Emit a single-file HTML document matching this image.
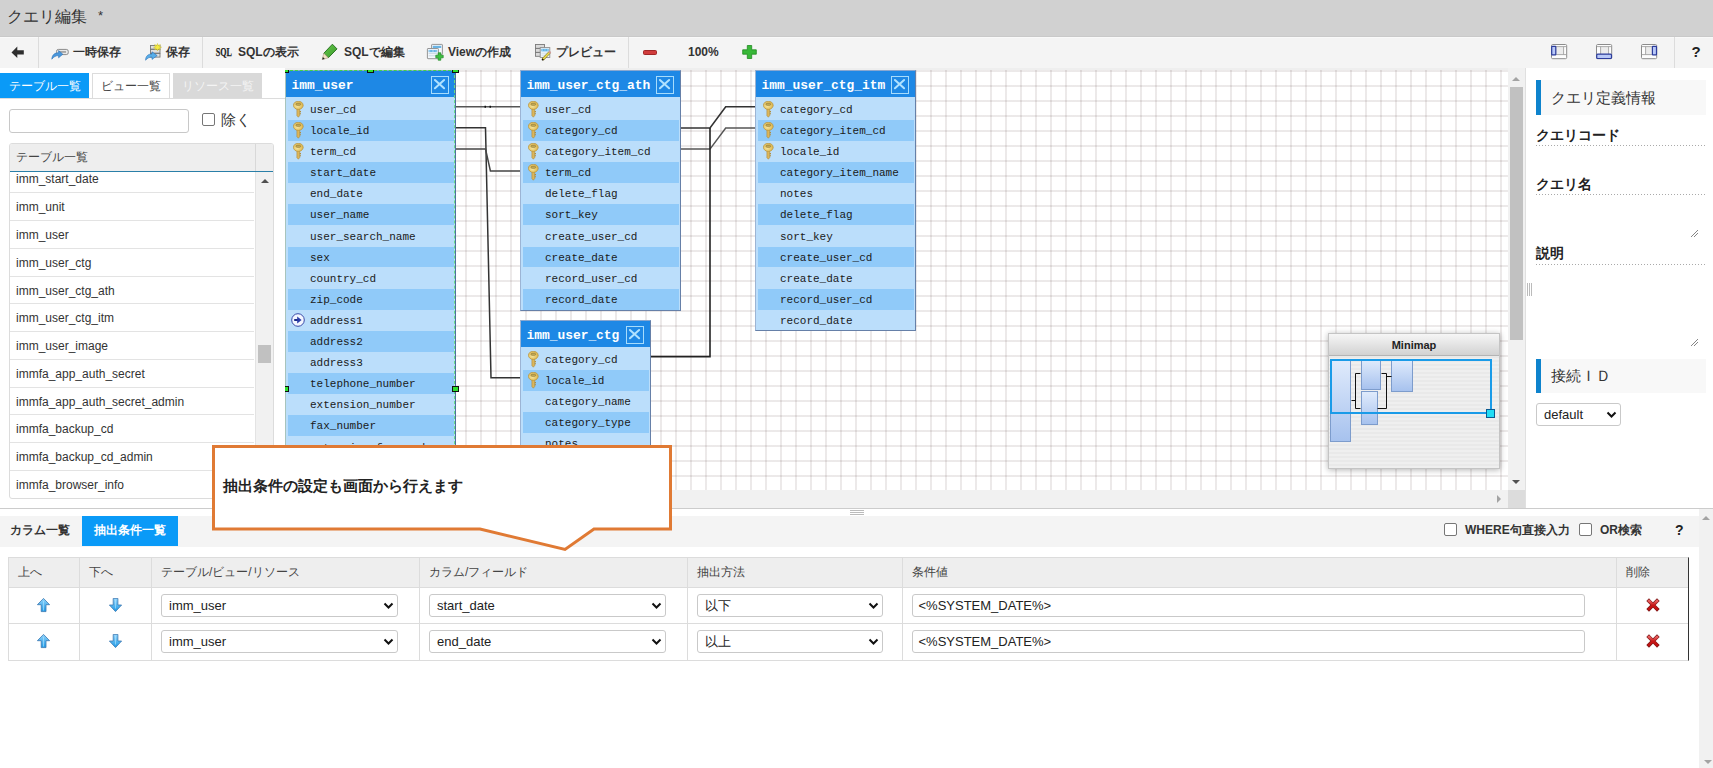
<!DOCTYPE html>
<html lang="ja"><head><meta charset="utf-8"><title>クエリ編集</title>
<style>
*{box-sizing:border-box;margin:0;padding:0}
html,body{width:1713px;height:768px;overflow:hidden;background:#fff}
body{position:relative;font-family:"Liberation Sans",sans-serif;color:#333}
.ab{position:absolute}
.tx{position:absolute;white-space:nowrap}
.tb{position:absolute;top:36px;height:32px;line-height:32px;font-size:12px;font-weight:bold;color:#333;white-space:nowrap}
.sep{position:absolute;top:37px;width:1px;height:31px;background:#dcdcdc}
.ert{position:absolute;background:#bbdefb;border:1px solid #7090c0;overflow:hidden}
.erh{position:absolute;left:0;top:0;right:0;height:25.8px;background:#1e88e5;color:#fff;font:bold 12.9px "Liberation Mono",monospace;line-height:30px;padding-left:5.5px;white-space:nowrap}
.erx{position:absolute;top:5px;width:18px;height:18px;border:1.7px solid #a6dcfc}
.err{position:absolute;left:1.5px;right:1px;height:20.9px;font:11px "Liberation Mono",monospace;color:#1a1a1a;line-height:23px;padding-left:22.5px;white-space:nowrap}
.err.alt{background:#90caf9}
.key{position:absolute;left:5.2px;top:2.1px}
.lr{position:absolute;left:0;width:244px;height:27.775px;border-bottom:1px solid #e3e3e3;font-size:12px;line-height:26px;padding-top:1px;padding-left:6px;color:#333;white-space:nowrap}
.sel{position:absolute;height:23px;border:1px solid #c9c9c9;border-radius:3px;background:#fff;font-size:13px;line-height:22px;padding-left:7px;color:#222;white-space:nowrap}
.chev{position:absolute;right:3.5px;top:6.5px}
</style></head><body>

<div class="ab" style="left:0;top:0;width:1713px;height:37px;background:#d1d1d1;border-bottom:1px solid #c9c9c9"></div>
<div class="tx" style="left:7px;top:0;height:36px;line-height:34px;font-size:16px;color:#333">クエリ編集</div>
<div class="tx" style="left:98px;top:8px;font-size:13px;line-height:16px;color:#333">*</div>
<div class="ab" style="left:0;top:37px;width:1713px;height:31px;background:#f4f4f4;border-top:1px solid #f9f9f9"></div>
<svg class="ab" style="left:11px;top:45.5px" width="14" height="13" viewBox="0 0 14 13"><path d="M0.5 6.4 L6.3 0.6 L6.3 4.3 L12.8 4.3 L12.8 8.4 L6.3 8.4 L6.3 12.1 Z" fill="#2e2e2e"/></svg>
<div class="sep" style="left:38px"></div>
<div class="sep" style="left:202px"></div>
<div class="sep" style="left:628px"></div>
<div class="sep" style="left:1674px"></div>
<svg class="ab" style="left:51px;top:46px" width="18" height="14" viewBox="0 0 18 14">
<rect x="5.5" y="3.4" width="11.8" height="5.2" rx="2" fill="#e8e8e8" stroke="#8a8a8a"/>
<rect x="8" y="5.3" width="7" height="1.3" fill="#8a8a8a"/>
<path d="M0.8 13.2 C1.2 8.5 3.8 6.8 7.6 6.8 L7.6 4.6 L11.8 8.2 L7.6 11.8 L7.6 9.6 C4.8 9.6 2.8 10.8 0.8 13.2 Z" fill="#4a98dc" stroke="#2a6fb5" stroke-width="0.6"/>
</svg>
<div class="tb" style="left:73px;">一時保存</div>
<svg class="ab" style="left:145px;top:43px" width="17" height="18" viewBox="0 0 17 18">
<rect x="5.5" y="2.5" width="9.5" height="3.6" fill="#e0e0e0" stroke="#777" stroke-width="0.9"/>
<rect x="5.5" y="6.5" width="9.5" height="3.6" fill="#e0e0e0" stroke="#777" stroke-width="0.9"/>
<rect x="5.5" y="10.5" width="9.5" height="3.6" fill="#e0e0e0" stroke="#777" stroke-width="0.9"/>
<path d="M12.5 0.4 L13.2 2.4 L15.4 1.5 L14.5 3.5 L16.6 4.2 L14.5 4.9 L15.4 6.9 L13.2 6 L12.5 8 L11.8 6 L9.6 6.9 L10.5 4.9 L8.4 4.2 L10.5 3.5 L9.6 1.5 L11.8 2.4 Z" fill="#f4ea40" stroke="#c8b820" stroke-width="0.4"/>
<path d="M0.6 17.2 C0.6 13 3.2 11 7 11 L7 8.8 L12.2 12.6 L7 16.4 L7 14 C4.4 14 2.4 15.2 0.6 17.2 Z" fill="#58aee8" stroke="#2a70b8" stroke-width="0.6"/>
</svg>
<div class="tb" style="left:166px;">保存</div>
<svg class="ab" style="left:215px;top:45px" width="19" height="14" viewBox="0 0 19 14"><text x="0.8" y="11" font-family="Liberation Serif" font-size="12.2" font-weight="bold" fill="#1e1e1e" stroke="#1e1e1e" stroke-width="0.25" textLength="16.2" lengthAdjust="spacingAndGlyphs">SQL</text></svg>
<div class="tb" style="left:238px;">SQLの表示</div>
<svg class="ab" style="left:321px;top:43px" width="17" height="18" viewBox="0 0 17 18">
<defs><linearGradient id="pg" x1="0" y1="0" x2="1" y2="1"><stop offset="0" stop-color="#66c84a"/><stop offset="1" stop-color="#3a9a2a"/></linearGradient></defs>
<path d="M11.4 1.2 L16 5.9 L7.3 14.8 L2.8 10.3 Z" fill="url(#pg)" stroke="#1f6a18" stroke-width="0.9" stroke-linejoin="round"/>
<path d="M2.8 10.3 L7.3 14.8 L1.2 16.6 Z" fill="#f2e2c4" stroke="#9a8a70" stroke-width="0.5"/>
<path d="M1.2 16.6 L1.9 14 L3.8 15.9 Z" fill="#222"/>
</svg>
<div class="tb" style="left:344px;">SQLで編集</div>
<svg class="ab" style="left:426px;top:43px" width="18" height="18" viewBox="0 0 18 18">
<rect x="5.6" y="1.4" width="10.8" height="10" rx="0.6" fill="#f4f8fc" stroke="#8a8a8a" stroke-width="0.9"/>
<rect x="6.8" y="2.8" width="8.4" height="2.2" fill="#6ab4e4"/>
<rect x="1.4" y="5.5" width="11" height="10.2" rx="0.6" fill="#f4f8fc" stroke="#8a8a8a" stroke-width="0.9"/>
<rect x="2.6" y="6.9" width="8.6" height="2.3" fill="#6ab4e4"/>
<path d="M3.2 8 H4.2 M6.3 8 H7.7 M9.6 8 H10.6" stroke="#dff2ff" stroke-width="0.9"/>
<path d="M2.6 10.6 H11.2 M2.6 12.8 H11.2" stroke="#c4d4e0" stroke-width="0.9"/>
<path d="M12.2 9.8 H14.8 V12.2 H17.2 V14.8 H14.8 V17.2 H12.2 V14.8 H9.8 V12.2 H12.2 Z" fill="#3cc040" stroke="#1f8a24" stroke-width="0.7" stroke-linejoin="round"/>
</svg>
<div class="tb" style="left:448px;">Viewの作成</div>
<svg class="ab" style="left:534px;top:43px" width="18" height="18" viewBox="0 0 18 18">
<rect x="1.5" y="1.5" width="9" height="3.8" fill="#dadada" stroke="#7a7a7a" stroke-width="0.9"/>
<rect x="1.5" y="5.5" width="9" height="3.8" fill="#dadada" stroke="#7a7a7a" stroke-width="0.9"/>
<rect x="1.5" y="9.5" width="9" height="3.8" fill="#dadada" stroke="#7a7a7a" stroke-width="0.9"/>
<rect x="6.2" y="4.6" width="9.6" height="9.8" fill="#f2f8fc" stroke="#8a8a8a" stroke-width="0.9"/>
<rect x="7.3" y="5.8" width="7.4" height="2.6" fill="#62b4e6"/>
<path d="M8.2 7 H9 M10.6 7 H11.4 M13 7 H13.8" stroke="#dff2ff" stroke-width="0.9"/>
<path d="M7.3 10.2 H14.7 M7.3 12.2 H14.7" stroke="#c8d6e0" stroke-width="0.8"/>
<path d="M9.2 16 L15.4 9.6" stroke="#7a6a20" stroke-width="2.6" stroke-linecap="round"/>
<path d="M9.2 16 L15.4 9.6" stroke="#eadc50" stroke-width="1.7"/>
<path d="M15.2 9.8 L16.4 8.6" stroke="#d89aa0" stroke-width="2.2"/>
<circle cx="8.6" cy="16.6" r="0.9" fill="#111"/>
</svg>
<div class="tb" style="left:556px;">プレビュー</div>
<div class="ab" style="left:643px;top:49.5px;width:14px;height:5px;background:#d03c3c;border:1px solid #a02626;border-radius:1.5px"></div>
<div class="tb" style="left:688px;">100%</div>
<svg class="ab" style="left:742px;top:45px" width="15" height="14" viewBox="0 0 15 14"><path d="M5.3 0.5 H9.7 V4.8 H14.3 V9.2 H9.7 V13.5 H5.3 V9.2 H0.7 V4.8 H5.3 Z" fill="#38b838" stroke="#1f8a1f" stroke-width="0.8"/></svg>
<svg class="ab" style="left:1551px;top:44px" width="17" height="16" viewBox="0 0 17 16"><rect x="0.5" y="0.5" width="15.2" height="14.2" rx="1.2" fill="#fdfdfd" stroke="#8c8c8c" stroke-width="1"/><rect x="5" y="3" width="7.2" height="7.2" fill="#ececec"/><path d="M0.8 2.6 H15.4 M0.8 10.6 H15.4 M4.6 2.6 V10.6 M12.6 2.6 V10.6" stroke="#a0a0a0" stroke-width="0.9"/><rect x="0.7" y="2.3" width="4.1" height="8.6" rx="0.6" fill="#b8c8f8" stroke="#2c3c9c" stroke-width="1.2"/></svg>
<svg class="ab" style="left:1596px;top:44px" width="17" height="16" viewBox="0 0 17 16"><rect x="0.5" y="0.5" width="15.2" height="14.2" rx="1.2" fill="#fdfdfd" stroke="#8c8c8c" stroke-width="1"/><rect x="5" y="3" width="7.2" height="7.2" fill="#ececec"/><path d="M0.8 2.6 H15.4 M0.8 10.6 H15.4 M4.6 2.6 V10.6 M12.6 2.6 V10.6" stroke="#a0a0a0" stroke-width="0.9"/><rect x="0.7" y="10.2" width="14.8" height="4.3" rx="1" fill="#b8c8f8" stroke="#2c3c9c" stroke-width="1.2"/></svg>
<svg class="ab" style="left:1641px;top:44px" width="17" height="16" viewBox="0 0 17 16"><rect x="0.5" y="0.5" width="15.2" height="14.2" rx="1.2" fill="#fdfdfd" stroke="#8c8c8c" stroke-width="1"/><rect x="5" y="3" width="7.2" height="7.2" fill="#ececec"/><path d="M0.8 2.6 H15.4 M0.8 10.6 H15.4 M4.6 2.6 V10.6 M12.6 2.6 V10.6" stroke="#a0a0a0" stroke-width="0.9"/><rect x="11.4" y="2.3" width="4.1" height="8.6" rx="0.6" fill="#b8c8f8" stroke="#2c3c9c" stroke-width="1.2"/></svg>
<div class="tx" style="left:1691.5px;top:36px;height:32px;line-height:32px;font-size:15px;font-weight:bold;color:#222">?</div>
<div class="tx" style="left:0;top:73px;width:89px;height:25px;background:#0a9af7;color:#fff;font-size:11.5px;line-height:26px;text-align:center">テーブル一覧</div>
<div class="tx" style="left:92px;top:73px;width:78px;height:26px;background:#fff;border:1px solid #dcdcdc;border-bottom:none;color:#444;font-size:11.5px;line-height:25px;text-align:center">ビュー一覧</div>
<div class="tx" style="left:173px;top:73px;width:89px;height:25px;background:#d9d9d9;color:#f4f4f4;font-size:11.5px;line-height:26px;text-align:center">リソース一覧</div>
<div class="ab" style="left:0;top:98px;width:285px;height:1px;background:#dcdcdc"></div>
<div class="ab" style="left:9px;top:109px;width:180px;height:24px;border:1px solid #c8c8c8;border-radius:3px;background:#fff"></div>
<div class="ab" style="left:202px;top:113px;width:13px;height:13px;border:1px solid #767676;border-radius:2px;background:#fff"></div>
<div class="tx" style="left:220.5px;top:109px;height:22px;line-height:21px;font-size:15px;color:#333">除く</div>
<div class="ab" style="left:9px;top:143px;width:265px;height:356px;border:1px solid #dcdcdc;border-radius:3px;overflow:hidden;background:#fff">
<div class="ab" style="left:0;top:0;width:263px;height:28px;background:#eeeeee;border-bottom:1px solid #2a7fa8"></div>
<div class="ab" style="left:245px;top:0;width:1px;height:27px;background:#d8d8d8"></div>
<div class="tx" style="left:6px;top:0;height:27px;line-height:26px;font-size:12px;color:#444">テーブル一覧</div>
<div class="ab" style="left:0;top:28px;width:245px;height:326px;overflow:hidden">
<div class="lr" style="top:-6.58px">imm_start_date</div>
<div class="lr" style="top:21.20px">imm_unit</div>
<div class="lr" style="top:48.97px">imm_user</div>
<div class="lr" style="top:76.75px">imm_user_ctg</div>
<div class="lr" style="top:104.52px">imm_user_ctg_ath</div>
<div class="lr" style="top:132.30px">imm_user_ctg_itm</div>
<div class="lr" style="top:160.07px">imm_user_image</div>
<div class="lr" style="top:187.85px">immfa_app_auth_secret</div>
<div class="lr" style="top:215.62px">immfa_app_auth_secret_admin</div>
<div class="lr" style="top:243.40px">immfa_backup_cd</div>
<div class="lr" style="top:271.18px">immfa_backup_cd_admin</div>
<div class="lr" style="top:298.95px">immfa_browser_info</div>
<div class="lr" style="top:326.72px">immfa_browser_xx</div>
</div>
<div class="ab" style="left:245px;top:28px;width:1px;height:326px;background:#e3e3e3"></div>
<div class="ab" style="left:246px;top:28px;width:17px;height:326px;background:#f1f1f1"></div>
<svg class="ab" style="left:250px;top:34px" width="10" height="6"><path d="M1 5 L5 1 L9 5 Z" fill="#505050"/></svg>
<div class="ab" style="left:248px;top:201px;width:13px;height:18px;background:#c1c1c1"></div>
</div>
<div class="ab" style="left:285px;top:68px;width:1240px;height:441px;overflow:hidden;background:#fff">
<div class="ab" style="left:0;top:0;width:1223px;height:422px;overflow:hidden">
<div class="ab" style="left:0;top:0;width:1223px;height:422px;background-color:#fff;background-image:linear-gradient(to right,rgba(55,25,25,0.095) 2px,transparent 2px),linear-gradient(to bottom,rgba(55,25,25,0.095) 2px,transparent 2px);background-size:15px 15px;background-position:0 2px"></div>
<div class="ert" style="left:0px;top:2px;width:171px;height:640px;border-color:#50709a;border-left-color:#9cb4d4;border-top-color:#8aa8d0">
<div class="erh">imm_user</div>
<svg class="erx" style="left:144.5px" width="18" height="18" viewBox="0 0 18 18"><path d="M3.3 3.4 L13.6 12.6 M13.6 3.4 L3.3 12.6" stroke="#b0e2ff" stroke-width="2.3" stroke-linecap="round"/></svg>
<div class="err" style="top:27.90px"><svg class="key" width="11" height="17" viewBox="0 0 11 17"><defs><radialGradient id="kg" cx="0.4" cy="0.6" r="0.7"><stop offset="0" stop-color="#f6e49a"/><stop offset="1" stop-color="#d8ae40"/></radialGradient></defs><path d="M3.9 7.6 H6.7 V14.6 L5.3 16.2 L3.9 14.6 Z" fill="#dcb65a" stroke="#a88434" stroke-width="0.55"/><path d="M6.7 10.6 H8 M6.7 12.8 H8" stroke="#b08c3c" stroke-width="1.1"/><ellipse cx="5.3" cy="4.3" rx="4.9" ry="4.1" fill="url(#kg)" stroke="#b48c38" stroke-width="0.65"/><rect x="3" y="2.3" width="4.6" height="2" rx="1" fill="#c8b058" stroke="#8a7030" stroke-width="0.6"/></svg>user_cd</div>
<div class="err alt" style="top:49.00px"><svg class="key" width="11" height="17" viewBox="0 0 11 17"><defs><radialGradient id="kg" cx="0.4" cy="0.6" r="0.7"><stop offset="0" stop-color="#f6e49a"/><stop offset="1" stop-color="#d8ae40"/></radialGradient></defs><path d="M3.9 7.6 H6.7 V14.6 L5.3 16.2 L3.9 14.6 Z" fill="#dcb65a" stroke="#a88434" stroke-width="0.55"/><path d="M6.7 10.6 H8 M6.7 12.8 H8" stroke="#b08c3c" stroke-width="1.1"/><ellipse cx="5.3" cy="4.3" rx="4.9" ry="4.1" fill="url(#kg)" stroke="#b48c38" stroke-width="0.65"/><rect x="3" y="2.3" width="4.6" height="2" rx="1" fill="#c8b058" stroke="#8a7030" stroke-width="0.6"/></svg>locale_id</div>
<div class="err" style="top:70.10px"><svg class="key" width="11" height="17" viewBox="0 0 11 17"><defs><radialGradient id="kg" cx="0.4" cy="0.6" r="0.7"><stop offset="0" stop-color="#f6e49a"/><stop offset="1" stop-color="#d8ae40"/></radialGradient></defs><path d="M3.9 7.6 H6.7 V14.6 L5.3 16.2 L3.9 14.6 Z" fill="#dcb65a" stroke="#a88434" stroke-width="0.55"/><path d="M6.7 10.6 H8 M6.7 12.8 H8" stroke="#b08c3c" stroke-width="1.1"/><ellipse cx="5.3" cy="4.3" rx="4.9" ry="4.1" fill="url(#kg)" stroke="#b48c38" stroke-width="0.65"/><rect x="3" y="2.3" width="4.6" height="2" rx="1" fill="#c8b058" stroke="#8a7030" stroke-width="0.6"/></svg>term_cd</div>
<div class="err alt" style="top:91.20px">start_date</div>
<div class="err" style="top:112.30px">end_date</div>
<div class="err alt" style="top:133.40px">user_name</div>
<div class="err" style="top:154.50px">user_search_name</div>
<div class="err alt" style="top:175.60px">sex</div>
<div class="err" style="top:196.70px">country_cd</div>
<div class="err alt" style="top:217.80px">zip_code</div>
<div class="err" style="top:238.90px"><svg class="key" style="left:3.5px;top:2.8px" width="15" height="15" viewBox="0 0 15 15"><circle cx="7" cy="7" r="6.3" fill="#f4f6ff" stroke="#3a4aa8" stroke-width="1"/><path d="M3.2 7 H8.5" stroke="#1a2a88" stroke-width="2"/><path d="M6.2 3.6 L10.6 7 L6.2 10.4 Z" fill="#2a3aa8"/></svg>address1</div>
<div class="err alt" style="top:260.00px">address2</div>
<div class="err" style="top:281.10px">address3</div>
<div class="err alt" style="top:302.20px">telephone_number</div>
<div class="err" style="top:323.30px">extension_number</div>
<div class="err alt" style="top:344.40px">fax_number</div>
<div class="err" style="top:365.50px">extension_fax_number</div>
<div class="err alt" style="top:386.60px">mail_address</div>
<div class="err" style="top:407.70px">delete_flag</div>
<div class="err alt" style="top:428.80px">sort_key</div>
</div>
<div class="ab" style="left:0;top:2px;width:1px;height:640px;background:#a8c4bc"></div>
<div class="ert" style="left:235px;top:2px;width:161px;height:240.5px;border-color:#6680a8;border-left-color:#9cb4d4;border-top-color:#8aa8d0">
<div class="erh">imm_user_ctg_ath</div>
<svg class="erx" style="left:134.5px" width="18" height="18" viewBox="0 0 18 18"><path d="M3.3 3.4 L13.6 12.6 M13.6 3.4 L3.3 12.6" stroke="#b0e2ff" stroke-width="2.3" stroke-linecap="round"/></svg>
<div class="err" style="top:27.90px"><svg class="key" width="11" height="17" viewBox="0 0 11 17"><defs><radialGradient id="kg" cx="0.4" cy="0.6" r="0.7"><stop offset="0" stop-color="#f6e49a"/><stop offset="1" stop-color="#d8ae40"/></radialGradient></defs><path d="M3.9 7.6 H6.7 V14.6 L5.3 16.2 L3.9 14.6 Z" fill="#dcb65a" stroke="#a88434" stroke-width="0.55"/><path d="M6.7 10.6 H8 M6.7 12.8 H8" stroke="#b08c3c" stroke-width="1.1"/><ellipse cx="5.3" cy="4.3" rx="4.9" ry="4.1" fill="url(#kg)" stroke="#b48c38" stroke-width="0.65"/><rect x="3" y="2.3" width="4.6" height="2" rx="1" fill="#c8b058" stroke="#8a7030" stroke-width="0.6"/></svg>user_cd</div>
<div class="err alt" style="top:49.00px"><svg class="key" width="11" height="17" viewBox="0 0 11 17"><defs><radialGradient id="kg" cx="0.4" cy="0.6" r="0.7"><stop offset="0" stop-color="#f6e49a"/><stop offset="1" stop-color="#d8ae40"/></radialGradient></defs><path d="M3.9 7.6 H6.7 V14.6 L5.3 16.2 L3.9 14.6 Z" fill="#dcb65a" stroke="#a88434" stroke-width="0.55"/><path d="M6.7 10.6 H8 M6.7 12.8 H8" stroke="#b08c3c" stroke-width="1.1"/><ellipse cx="5.3" cy="4.3" rx="4.9" ry="4.1" fill="url(#kg)" stroke="#b48c38" stroke-width="0.65"/><rect x="3" y="2.3" width="4.6" height="2" rx="1" fill="#c8b058" stroke="#8a7030" stroke-width="0.6"/></svg>category_cd</div>
<div class="err" style="top:70.10px"><svg class="key" width="11" height="17" viewBox="0 0 11 17"><defs><radialGradient id="kg" cx="0.4" cy="0.6" r="0.7"><stop offset="0" stop-color="#f6e49a"/><stop offset="1" stop-color="#d8ae40"/></radialGradient></defs><path d="M3.9 7.6 H6.7 V14.6 L5.3 16.2 L3.9 14.6 Z" fill="#dcb65a" stroke="#a88434" stroke-width="0.55"/><path d="M6.7 10.6 H8 M6.7 12.8 H8" stroke="#b08c3c" stroke-width="1.1"/><ellipse cx="5.3" cy="4.3" rx="4.9" ry="4.1" fill="url(#kg)" stroke="#b48c38" stroke-width="0.65"/><rect x="3" y="2.3" width="4.6" height="2" rx="1" fill="#c8b058" stroke="#8a7030" stroke-width="0.6"/></svg>category_item_cd</div>
<div class="err alt" style="top:91.20px"><svg class="key" width="11" height="17" viewBox="0 0 11 17"><defs><radialGradient id="kg" cx="0.4" cy="0.6" r="0.7"><stop offset="0" stop-color="#f6e49a"/><stop offset="1" stop-color="#d8ae40"/></radialGradient></defs><path d="M3.9 7.6 H6.7 V14.6 L5.3 16.2 L3.9 14.6 Z" fill="#dcb65a" stroke="#a88434" stroke-width="0.55"/><path d="M6.7 10.6 H8 M6.7 12.8 H8" stroke="#b08c3c" stroke-width="1.1"/><ellipse cx="5.3" cy="4.3" rx="4.9" ry="4.1" fill="url(#kg)" stroke="#b48c38" stroke-width="0.65"/><rect x="3" y="2.3" width="4.6" height="2" rx="1" fill="#c8b058" stroke="#8a7030" stroke-width="0.6"/></svg>term_cd</div>
<div class="err" style="top:112.30px">delete_flag</div>
<div class="err alt" style="top:133.40px">sort_key</div>
<div class="err" style="top:154.50px">create_user_cd</div>
<div class="err alt" style="top:175.60px">create_date</div>
<div class="err" style="top:196.70px">record_user_cd</div>
<div class="err alt" style="top:217.80px">record_date</div>
</div>
<div class="ert" style="left:470px;top:2px;width:161px;height:260.5px;border-color:#6680a8;border-left-color:#9cb4d4;border-top-color:#8aa8d0">
<div class="erh">imm_user_ctg_itm</div>
<svg class="erx" style="left:134.5px" width="18" height="18" viewBox="0 0 18 18"><path d="M3.3 3.4 L13.6 12.6 M13.6 3.4 L3.3 12.6" stroke="#b0e2ff" stroke-width="2.3" stroke-linecap="round"/></svg>
<div class="err" style="top:27.90px"><svg class="key" width="11" height="17" viewBox="0 0 11 17"><defs><radialGradient id="kg" cx="0.4" cy="0.6" r="0.7"><stop offset="0" stop-color="#f6e49a"/><stop offset="1" stop-color="#d8ae40"/></radialGradient></defs><path d="M3.9 7.6 H6.7 V14.6 L5.3 16.2 L3.9 14.6 Z" fill="#dcb65a" stroke="#a88434" stroke-width="0.55"/><path d="M6.7 10.6 H8 M6.7 12.8 H8" stroke="#b08c3c" stroke-width="1.1"/><ellipse cx="5.3" cy="4.3" rx="4.9" ry="4.1" fill="url(#kg)" stroke="#b48c38" stroke-width="0.65"/><rect x="3" y="2.3" width="4.6" height="2" rx="1" fill="#c8b058" stroke="#8a7030" stroke-width="0.6"/></svg>category_cd</div>
<div class="err alt" style="top:49.00px"><svg class="key" width="11" height="17" viewBox="0 0 11 17"><defs><radialGradient id="kg" cx="0.4" cy="0.6" r="0.7"><stop offset="0" stop-color="#f6e49a"/><stop offset="1" stop-color="#d8ae40"/></radialGradient></defs><path d="M3.9 7.6 H6.7 V14.6 L5.3 16.2 L3.9 14.6 Z" fill="#dcb65a" stroke="#a88434" stroke-width="0.55"/><path d="M6.7 10.6 H8 M6.7 12.8 H8" stroke="#b08c3c" stroke-width="1.1"/><ellipse cx="5.3" cy="4.3" rx="4.9" ry="4.1" fill="url(#kg)" stroke="#b48c38" stroke-width="0.65"/><rect x="3" y="2.3" width="4.6" height="2" rx="1" fill="#c8b058" stroke="#8a7030" stroke-width="0.6"/></svg>category_item_cd</div>
<div class="err" style="top:70.10px"><svg class="key" width="11" height="17" viewBox="0 0 11 17"><defs><radialGradient id="kg" cx="0.4" cy="0.6" r="0.7"><stop offset="0" stop-color="#f6e49a"/><stop offset="1" stop-color="#d8ae40"/></radialGradient></defs><path d="M3.9 7.6 H6.7 V14.6 L5.3 16.2 L3.9 14.6 Z" fill="#dcb65a" stroke="#a88434" stroke-width="0.55"/><path d="M6.7 10.6 H8 M6.7 12.8 H8" stroke="#b08c3c" stroke-width="1.1"/><ellipse cx="5.3" cy="4.3" rx="4.9" ry="4.1" fill="url(#kg)" stroke="#b48c38" stroke-width="0.65"/><rect x="3" y="2.3" width="4.6" height="2" rx="1" fill="#c8b058" stroke="#8a7030" stroke-width="0.6"/></svg>locale_id</div>
<div class="err alt" style="top:91.20px">category_item_name</div>
<div class="err" style="top:112.30px">notes</div>
<div class="err alt" style="top:133.40px">delete_flag</div>
<div class="err" style="top:154.50px">sort_key</div>
<div class="err alt" style="top:175.60px">create_user_cd</div>
<div class="err" style="top:196.70px">create_date</div>
<div class="err alt" style="top:217.80px">record_user_cd</div>
<div class="err" style="top:238.90px">record_date</div>
</div>
<div class="ert" style="left:235px;top:252px;width:131px;height:240px;border-color:#6680a8;border-left-color:#9cb4d4;border-top-color:#8aa8d0">
<div class="erh">imm_user_ctg</div>
<svg class="erx" style="left:104.5px" width="18" height="18" viewBox="0 0 18 18"><path d="M3.3 3.4 L13.6 12.6 M13.6 3.4 L3.3 12.6" stroke="#b0e2ff" stroke-width="2.3" stroke-linecap="round"/></svg>
<div class="err" style="top:27.90px"><svg class="key" width="11" height="17" viewBox="0 0 11 17"><defs><radialGradient id="kg" cx="0.4" cy="0.6" r="0.7"><stop offset="0" stop-color="#f6e49a"/><stop offset="1" stop-color="#d8ae40"/></radialGradient></defs><path d="M3.9 7.6 H6.7 V14.6 L5.3 16.2 L3.9 14.6 Z" fill="#dcb65a" stroke="#a88434" stroke-width="0.55"/><path d="M6.7 10.6 H8 M6.7 12.8 H8" stroke="#b08c3c" stroke-width="1.1"/><ellipse cx="5.3" cy="4.3" rx="4.9" ry="4.1" fill="url(#kg)" stroke="#b48c38" stroke-width="0.65"/><rect x="3" y="2.3" width="4.6" height="2" rx="1" fill="#c8b058" stroke="#8a7030" stroke-width="0.6"/></svg>category_cd</div>
<div class="err alt" style="top:49.00px"><svg class="key" width="11" height="17" viewBox="0 0 11 17"><defs><radialGradient id="kg" cx="0.4" cy="0.6" r="0.7"><stop offset="0" stop-color="#f6e49a"/><stop offset="1" stop-color="#d8ae40"/></radialGradient></defs><path d="M3.9 7.6 H6.7 V14.6 L5.3 16.2 L3.9 14.6 Z" fill="#dcb65a" stroke="#a88434" stroke-width="0.55"/><path d="M6.7 10.6 H8 M6.7 12.8 H8" stroke="#b08c3c" stroke-width="1.1"/><ellipse cx="5.3" cy="4.3" rx="4.9" ry="4.1" fill="url(#kg)" stroke="#b48c38" stroke-width="0.65"/><rect x="3" y="2.3" width="4.6" height="2" rx="1" fill="#c8b058" stroke="#8a7030" stroke-width="0.6"/></svg>locale_id</div>
<div class="err" style="top:70.10px">category_name</div>
<div class="err alt" style="top:91.20px">category_type</div>
<div class="err" style="top:112.30px">notes</div>
<div class="err alt" style="top:133.40px">delete_flag</div>
<div class="err" style="top:154.50px">sort_key</div>
</div>
<div class="ab" style="left:0;top:2px;width:171px;height:1px;border-top:1px dashed #44d444"></div>
<div class="ab" style="left:169px;top:2px;width:1px;height:640px;border-left:1px dashed #66e088"></div>
<div class="ab" style="left:-3px;top:-1px;width:7px;height:6px;background:#2ee02e;border:1px solid #111"></div>
<div class="ab" style="left:82px;top:-1px;width:7px;height:6px;background:#2ee02e;border:1px solid #111"></div>
<div class="ab" style="left:167px;top:-1px;width:7px;height:6px;background:#2ee02e;border:1px solid #111"></div>
<div class="ab" style="left:-3px;top:318px;width:7px;height:6px;background:#2ee02e;border:1px solid #111"></div>
<div class="ab" style="left:167px;top:318px;width:7px;height:6px;background:#2ee02e;border:1px solid #111"></div>
<svg class="ab" style="left:0;top:0" width="1223" height="422"><g transform="translate(-285,-68)" fill="none" stroke-linejoin="miter"><path d="M456 106.8 H520" stroke="#555" stroke-width="1.5"/><path d="M484.5 106.8 H486 M489.5 106.8 H491" stroke="#111" stroke-width="2"/><path d="M456 127.8 H485.5 L491 377.8 H520" stroke="#333" stroke-width="1.5"/><path d="M456 148.9 H485.5 L490.4 170.9 H520" stroke="#444" stroke-width="1.5"/><path d="M681 128 H710 L725.7 106.7 H755" stroke="#333" stroke-width="1.6"/><path d="M681 149.1 H710 L725.7 128 H755" stroke="#555" stroke-width="1.5"/><path d="M710 128 V356.6 H651" stroke="#222" stroke-width="1.6"/></g></svg>
<div class="ab" style="left:1043px;top:265px;width:172px;height:136px;border:1px solid #c4c4c4;box-shadow:0 1px 6px rgba(0,0,0,0.3);background:#ececec;background-image:repeating-linear-gradient(to bottom,#efefef 0,#efefef 2px,#e9e9e9 2px,#e9e9e9 4px)">
<div class="tx" style="left:0;top:0;width:170px;height:22px;background:linear-gradient(#f6f6f6,#d2d2d2);border-bottom:1px solid #b4b4b4;font-size:11px;font-weight:bold;color:#222;text-align:center;line-height:22px">Minimap</div>
<div class="ab" style="left:0.6px;top:25.2px;width:21.7px;height:83.3px;background:linear-gradient(#e0ebfc,#a7c2ee);border:1px solid #7d9ccc"></div>
<div class="ab" style="left:31.5px;top:25.2px;width:20.9px;height:31.3px;background:linear-gradient(#e0ebfc,#a7c2ee);border:1px solid #7d9ccc"></div>
<div class="ab" style="left:62.3px;top:25.2px;width:21.4px;height:33.2px;background:linear-gradient(#e0ebfc,#a7c2ee);border:1px solid #7d9ccc"></div>
<div class="ab" style="left:31.5px;top:57.2px;width:17.3px;height:34.2px;background:linear-gradient(#e0ebfc,#a7c2ee);border:1px solid #7d9ccc"></div>
<svg class="ab" style="left:0;top:0" width="170" height="134"><g transform="translate(-1329,-334)" fill="none" stroke="#111" stroke-width="1"><path d="M1351.5 400.5 H1355.5 V373.5 H1360.5"/><path d="M1355.5 398 V408.5 H1360.5"/><path d="M1381.5 373.5 H1386.5 V408.5 H1377.5"/><path d="M1386.5 376.5 H1391.5"/></g></svg>
<div class="ab" style="left:0.6px;top:25px;width:162px;height:55px;border:2.5px solid #1a9be8"></div>
<div class="ab" style="left:157px;top:75px;width:9px;height:9px;background:#22ddf5;border:1px solid #0a5a90"></div>
</div>
<div class="ab" style="left:0;top:0;width:1223px;height:2px;background:#eeeeee"></div>
</div>
<div class="ab" style="left:1223px;top:0;width:17px;height:422px;background:#f1f1f1"></div>
<svg class="ab" style="left:1226px;top:8px" width="10" height="6"><path d="M1 5 L5 1 L9 5 Z" fill="#a3a3a3"/></svg>
<div class="ab" style="left:1225px;top:19px;width:13px;height:253px;background:#c1c1c1"></div>
<svg class="ab" style="left:1226px;top:411px" width="10" height="6"><path d="M1 1 L5 5 L9 1 Z" fill="#505050"/></svg>
<div class="ab" style="left:0;top:422px;width:1223px;height:18px;background:#f1f1f1"></div>
<svg class="ab" style="left:1211px;top:426px" width="6" height="10"><path d="M1 1 L5 5 L1 9 Z" fill="#a3a3a3"/></svg>
<div class="ab" style="left:1223px;top:422px;width:17px;height:18px;background:#dcdcdc"></div>
</div>
<div class="ab" style="left:1525px;top:68px;width:1px;height:441px;background:#e0e0e0"></div>
<div class="ab" style="left:1536px;top:80px;width:170px;height:35px;background:#f8f8f8"></div>
<div class="ab" style="left:1536px;top:80px;width:5px;height:35px;background:#0e83cd"></div>
<div class="tx" style="left:1551px;top:80px;height:35px;line-height:35px;font-size:15px;color:#333">クエリ定義情報</div>
<div class="ab" style="left:1536px;top:359px;width:170px;height:34px;background:#f8f8f8"></div>
<div class="ab" style="left:1536px;top:359px;width:5px;height:34px;background:#0e83cd"></div>
<div class="tx" style="left:1551px;top:359px;height:34px;line-height:34px;font-size:15px;color:#333">接続ＩＤ</div>
<div class="tx" style="left:1536px;top:125px;height:20px;line-height:20px;font-size:14px;font-weight:bold;color:#222">クエリコード</div>
<div class="tx" style="left:1536px;top:174px;height:20px;line-height:20px;font-size:14px;font-weight:bold;color:#222">クエリ名</div>
<div class="tx" style="left:1536px;top:243px;height:20px;line-height:20px;font-size:14px;font-weight:bold;color:#222">説明</div>
<div class="ab" style="left:1536px;top:145px;width:170px;height:1px;background-image:linear-gradient(to right,#aaa 1px,transparent 1px);background-size:3px 1px"></div>
<div class="ab" style="left:1536px;top:194px;width:170px;height:1px;background-image:linear-gradient(to right,#aaa 1px,transparent 1px);background-size:3px 1px"></div>
<div class="ab" style="left:1536px;top:264px;width:170px;height:1px;background-image:linear-gradient(to right,#aaa 1px,transparent 1px);background-size:3px 1px"></div>
<svg class="ab" style="left:1690px;top:229px" width="9" height="9"><path d="M1 8 L8 1 M4 8 L8 4" stroke="#777" stroke-width="0.9"/></svg>
<svg class="ab" style="left:1690px;top:338px" width="9" height="9"><path d="M1 8 L8 1 M4 8 L8 4" stroke="#777" stroke-width="0.9"/></svg>
<svg class="ab" style="left:1527px;top:283px" width="6" height="13"><path d="M0.5 0 V13 M2.5 0 V13 M4.5 0 V13" stroke="#bbb" stroke-width="1"/></svg>
<div class="sel" style="left:1536px;top:403px;width:85px;height:23px;font-size:13px">default<svg class="chev" width="11" height="8"><path d="M1.5 1.5 L5.5 5.5 L9.5 1.5" stroke="#111" stroke-width="2" fill="none"/></svg></div>
<div class="ab" style="left:0;top:508px;width:1713px;height:1px;background:#cccccc"></div>
<svg class="ab" style="left:850px;top:510px" width="14" height="5"><path d="M0 0.5 H14 M0 2.5 H14 M0 4.5 H14" stroke="#aaa" stroke-width="0.8"/></svg>
<div class="ab" style="left:0;top:516px;width:1699px;height:31px;background:#f4f4f4"></div>
<div class="tx" style="left:10px;top:516px;height:30px;line-height:28px;font-size:12px;font-weight:bold;color:#333">カラム一覧</div>
<div class="tx" style="left:82px;top:516px;width:96px;height:30px;line-height:28px;background:#0a9af7;color:#fff;font-size:12px;font-weight:bold;text-align:center">抽出条件一覧</div>
<div class="ab" style="left:1444px;top:523px;width:13px;height:13px;border:1px solid #767676;border-radius:2px;background:#fff"></div>
<div class="tx" style="left:1465px;top:516px;height:29px;line-height:28px;font-size:12px;font-weight:bold;color:#333">WHERE句直接入力</div>
<div class="ab" style="left:1579px;top:523px;width:13px;height:13px;border:1px solid #767676;border-radius:2px;background:#fff"></div>
<div class="tx" style="left:1600px;top:516px;height:29px;line-height:28px;font-size:12px;font-weight:bold;color:#333">OR検索</div>
<div class="tx" style="left:1675px;top:516px;height:29px;line-height:28px;font-size:14px;font-weight:bold;color:#222">?</div>
<div class="ab" style="left:1699px;top:509px;width:14px;height:259px;background:#f1f1f1"></div>
<svg class="ab" style="left:1701px;top:515px" width="10" height="6"><path d="M1 5 L5 1 L9 5 Z" fill="#a3a3a3"/></svg>
<svg class="ab" style="left:1702.5px;top:759px" width="10" height="6"><path d="M1 1 L5 5 L9 1 Z" fill="#a3a3a3"/></svg>
<div class="ab" style="left:8px;top:557px;width:1681px;height:104px;border:1px solid #dcdcdc;border-right:1.5px solid #333"></div>
<div class="ab" style="left:9px;top:558px;width:1679px;height:29.5px;background:#eeeeee;border-bottom:1px solid #dcdcdc"></div>
<div class="ab" style="left:9px;top:623px;width:1679px;height:1px;background:#dcdcdc"></div>
<div class="ab" style="left:79px;top:558px;width:1px;height:102px;background:#dcdcdc"></div>
<div class="ab" style="left:151px;top:558px;width:1px;height:102px;background:#dcdcdc"></div>
<div class="ab" style="left:419px;top:558px;width:1px;height:102px;background:#dcdcdc"></div>
<div class="ab" style="left:687px;top:558px;width:1px;height:102px;background:#dcdcdc"></div>
<div class="ab" style="left:902px;top:558px;width:1px;height:102px;background:#dcdcdc"></div>
<div class="ab" style="left:1616px;top:558px;width:1px;height:102px;background:#dcdcdc"></div>
<div class="tx" style="left:18px;top:558px;height:29px;line-height:28px;font-size:12px;color:#444">上へ</div>
<div class="tx" style="left:89px;top:558px;height:29px;line-height:28px;font-size:12px;color:#444">下へ</div>
<div class="tx" style="left:161px;top:558px;height:29px;line-height:28px;font-size:12px;color:#444">テーブル/ビュー/リソース</div>
<div class="tx" style="left:429px;top:558px;height:29px;line-height:28px;font-size:12px;color:#444">カラム/フィールド</div>
<div class="tx" style="left:697px;top:558px;height:29px;line-height:28px;font-size:12px;color:#444">抽出方法</div>
<div class="tx" style="left:912px;top:558px;height:29px;line-height:28px;font-size:12px;color:#444">条件値</div>
<div class="tx" style="left:1626px;top:558px;height:29px;line-height:28px;font-size:12px;color:#444">削除</div>
<svg class="ab" style="left:37px;top:598px" width="14" height="15" viewBox="0 0 14 15"><defs><linearGradient id="ua" x1="0" y1="0" x2="0" y2="1"><stop offset="0" stop-color="#90d4fc"/><stop offset="1" stop-color="#1e98e4"/></linearGradient></defs><path d="M6.5 0.4 L12.6 6.7 H9 V13.6 H4.2 V6.7 H0.4 Z" fill="url(#ua)" stroke="#3a76b0" stroke-width="0.8" stroke-linejoin="round"/><path d="M6.5 3 V12.5" stroke="#b8e6ff" stroke-width="1" opacity="0.6"/></svg>
<svg class="ab" style="left:109px;top:598px" width="14" height="15" viewBox="0 0 14 15"><path d="M4.2 0.4 H8.9 V7 H12.6 L6.5 13.6 L0.4 7 H4.2 Z" fill="url(#ua)" stroke="#3a76b0" stroke-width="0.8" stroke-linejoin="round"/><path d="M6.5 1.5 V10.5" stroke="#b8e6ff" stroke-width="1" opacity="0.6"/></svg>
<div class="sel" style="left:161px;top:594px;width:237px">imm_user<svg class="chev" width="11" height="8"><path d="M1.5 1.5 L5.5 5.5 L9.5 1.5" stroke="#111" stroke-width="2" fill="none"/></svg></div>
<div class="sel" style="left:429px;top:594px;width:237px">start_date<svg class="chev" width="11" height="8"><path d="M1.5 1.5 L5.5 5.5 L9.5 1.5" stroke="#111" stroke-width="2" fill="none"/></svg></div>
<div class="sel" style="left:697px;top:594px;width:186px">以下<svg class="chev" width="11" height="8"><path d="M1.5 1.5 L5.5 5.5 L9.5 1.5" stroke="#111" stroke-width="2" fill="none"/></svg></div>
<div class="sel" style="left:912px;top:594px;width:673px;padding-left:5.5px">&lt;%SYSTEM_DATE%&gt;</div>
<svg class="ab" style="left:1646px;top:598.3px" width="14" height="14" viewBox="0 0 14 14"><defs><linearGradient id="xg" x1="0" y1="0" x2="0" y2="1"><stop offset="0" stop-color="#e86060"/><stop offset="0.5" stop-color="#c81818"/><stop offset="1" stop-color="#c01010"/></linearGradient></defs><path d="M3 3 L11 11 M11 3 L3 11" stroke="#781818" stroke-width="3.8" stroke-linecap="square"/><path d="M3 3 L11 11 M11 3 L3 11" stroke="url(#xg)" stroke-width="2.6" stroke-linecap="square"/></svg>
<svg class="ab" style="left:37px;top:634px" width="14" height="15" viewBox="0 0 14 15"><defs><linearGradient id="ua" x1="0" y1="0" x2="0" y2="1"><stop offset="0" stop-color="#90d4fc"/><stop offset="1" stop-color="#1e98e4"/></linearGradient></defs><path d="M6.5 0.4 L12.6 6.7 H9 V13.6 H4.2 V6.7 H0.4 Z" fill="url(#ua)" stroke="#3a76b0" stroke-width="0.8" stroke-linejoin="round"/><path d="M6.5 3 V12.5" stroke="#b8e6ff" stroke-width="1" opacity="0.6"/></svg>
<svg class="ab" style="left:109px;top:634px" width="14" height="15" viewBox="0 0 14 15"><path d="M4.2 0.4 H8.9 V7 H12.6 L6.5 13.6 L0.4 7 H4.2 Z" fill="url(#ua)" stroke="#3a76b0" stroke-width="0.8" stroke-linejoin="round"/><path d="M6.5 1.5 V10.5" stroke="#b8e6ff" stroke-width="1" opacity="0.6"/></svg>
<div class="sel" style="left:161px;top:630px;width:237px">imm_user<svg class="chev" width="11" height="8"><path d="M1.5 1.5 L5.5 5.5 L9.5 1.5" stroke="#111" stroke-width="2" fill="none"/></svg></div>
<div class="sel" style="left:429px;top:630px;width:237px">end_date<svg class="chev" width="11" height="8"><path d="M1.5 1.5 L5.5 5.5 L9.5 1.5" stroke="#111" stroke-width="2" fill="none"/></svg></div>
<div class="sel" style="left:697px;top:630px;width:186px">以上<svg class="chev" width="11" height="8"><path d="M1.5 1.5 L5.5 5.5 L9.5 1.5" stroke="#111" stroke-width="2" fill="none"/></svg></div>
<div class="sel" style="left:912px;top:630px;width:673px;padding-left:5.5px">&lt;%SYSTEM_DATE%&gt;</div>
<svg class="ab" style="left:1646px;top:634.3px" width="14" height="14" viewBox="0 0 14 14"><defs><linearGradient id="xg" x1="0" y1="0" x2="0" y2="1"><stop offset="0" stop-color="#e86060"/><stop offset="0.5" stop-color="#c81818"/><stop offset="1" stop-color="#c01010"/></linearGradient></defs><path d="M3 3 L11 11 M11 3 L3 11" stroke="#781818" stroke-width="3.8" stroke-linecap="square"/><path d="M3 3 L11 11 M11 3 L3 11" stroke="url(#xg)" stroke-width="2.6" stroke-linecap="square"/></svg>
<svg class="ab" style="left:200px;top:440px" width="480" height="120" viewBox="200 440 480 120"><path d="M213.5 446.5 H670.5 V529 H594 L565 549.5 L480 529 H213.5 Z" fill="#fff" stroke="#e07a34" stroke-width="3" stroke-linejoin="miter"/></svg>
<div class="tx" style="left:223px;top:476px;height:20px;line-height:20px;font-size:14.5px;font-weight:bold;color:#222">抽出条件の設定も画面から行えます</div>
</body></html>
